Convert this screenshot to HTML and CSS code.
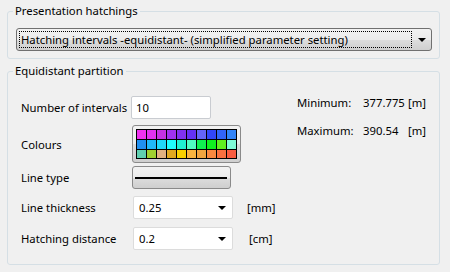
FILE: index.html
```html
<!DOCTYPE html>
<html lang="en">
<head>
    <meta charset="UTF-8">
    <meta name="viewport" content="width=device-width, initial-scale=1.0">
    <title>Hatching Settings</title>
    <link rel="stylesheet" href="styles.css">
</head>
<body>
    <div class="dialog">
        <fieldset class="group group-top">
            <legend>Presentation hatchings</legend>
            <div class="dropdown">
                <span class="focus-rect">Hatching intervals -equidistant- (simplified parameter setting)</span>
                <span class="arrow"></span>
            </div>
        </fieldset>

        <fieldset class="group group-main">
            <legend>Equidistant partition</legend>
            <div class="columns">
                <div class="form">
                    <div class="row row-intervals">
                        <span class="label">Number of intervals</span>
                        <div class="textbox">10</div>
                    </div>
                    <div class="row row-colours">
                        <span class="label">Colours</span>
                        <div class="push-button colours-button">
                            <div class="swatches">
                                <span style="background:#f032f0"></span>
                                <span style="background:#e032f0"></span>
                                <span style="background:#c432e4"></span>
                                <span style="background:#a032f0"></span>
                                <span style="background:#8032f0"></span>
                                <span style="background:#6432f4"></span>
                                <span style="background:#6464f8"></span>
                                <span style="background:#3246f8"></span>
                                <span style="background:#3264f8"></span>
                                <span style="background:#3284f8"></span>
                                <span style="background:#2090f0"></span>
                                <span style="background:#20b8f8"></span>
                                <span style="background:#20d8f8"></span>
                                <span style="background:#20fcfc"></span>
                                <span style="background:#20f0d0"></span>
                                <span style="background:#50fcc0"></span>
                                <span style="background:#10f050"></span>
                                <span style="background:#10f020"></span>
                                <span style="background:#60f020"></span>
                                <span style="background:#80fcd8"></span>
                                <span style="background:#60d0b0"></span>
                                <span style="background:#a0d030"></span>
                                <span style="background:#e0b080"></span>
                                <span style="background:#e0a820"></span>
                                <span style="background:#f8d000"></span>
                                <span style="background:#f8b440"></span>
                                <span style="background:#f0a440"></span>
                                <span style="background:#f88840"></span>
                                <span style="background:#f87040"></span>
                                <span style="background:#f85c40"></span>
                            </div>
                        </div>
                    </div>
                    <div class="row row-linetype">
                        <span class="label">Line type</span>
                        <div class="push-button linetype-button">
                            <span class="line-sample"></span>
                        </div>
                    </div>
                    <div class="row row-thickness">
                        <span class="label">Line thickness</span>
                        <div class="select">
                            <span class="select-value">0.25</span>
                            <span class="arrow"></span>
                        </div>
                        <span class="unit unit-mm">[mm]</span>
                    </div>
                    <div class="row row-distance">
                        <span class="label">Hatching distance</span>
                        <div class="select">
                            <span class="select-value">0.2</span>
                            <span class="arrow"></span>
                        </div>
                        <span class="unit unit-cm">[cm]</span>
                    </div>
                </div>

                <div class="range">
                    <span>Minimum:</span>
                    <span>377.775</span>
                    <span>[m]</span>
                    <span>Maximum:</span>
                    <span>390.54</span>
                    <span>[m]</span>
                </div>
            </div>
        </fieldset>
    </div>
</body>
</html>
```

FILE: styles.css
```css
body {
    margin: 0;
    background-color: #f0f0f0;
    font-family: "Noto Sans", sans-serif;
    font-size: 11.3px;
    color: #000;
}

.dialog {
    padding: 3px 10px 0 7px;
}

.group {
    margin: 0;
    border: 1px solid #d5dfe5;
    border-radius: 3px;
}

.group legend {
    padding: 0 2px;
    line-height: 16px;
}

.group-top {
    padding: 9px 7px 7px 8px;
}

.group-top legend {
    margin-left: -3px;
}

.group-main {
    margin-top: 4px;
    padding: 17px 7px 14px 13px;
}

.group-main legend {
    margin-left: -8px;
}

/* drop-down list in the first group */
.dropdown {
    display: flex;
    align-items: center;
    height: 23px;
    box-sizing: border-box;
    padding: 0 5px 0 2px;
    border: 1px solid #707070;
    border-radius: 3px;
    background: linear-gradient(#f2f2f2, #ebebeb 50%, #dddddd 51%, #cfcfcf);
}

.focus-rect {
    flex: 1;
    height: 17px;
    box-sizing: border-box;
    padding-left: 1px;
    line-height: 15px;
    border: 1px dotted #000;
}

.arrow {
    width: 0;
    height: 0;
    border-left: 4px solid transparent;
    border-right: 4px solid transparent;
    border-top: 4px solid #000;
}

.dropdown .arrow {
    margin-left: 6px;
}

/* second group */
.columns {
    display: flex;
}

.form {
    width: 276px;
    flex-shrink: 0;
}

.row {
    display: flex;
    align-items: center;
}

.row-colours {
    margin-top: 6px;
}

.row-linetype {
    margin-top: 3px;
}

.row-thickness {
    margin-top: 7px;
}

.row-distance {
    margin-top: 8px;
}

.label {
    width: 110px;
    flex-shrink: 0;
    white-space: nowrap;
}

.textbox {
    width: 80px;
    height: 23px;
    box-sizing: border-box;
    padding-left: 4px;
    line-height: 21px;
    background: #fff;
    border: 1px solid #c9ccd1;
    border-radius: 2px;
}

.push-button {
    box-sizing: border-box;
    margin-left: 1px;
    border: 1px solid #8a8a8a;
    border-radius: 3px;
    background: linear-gradient(#f2f2f2, #ebebeb 50%, #dddddd 51%, #cfcfcf);
}

.colours-button {
    width: 109px;
    padding: 3px;
}

.swatches {
    display: grid;
    grid-template-columns: repeat(10, 9px);
    grid-template-rows: 9px 9px 8px;
    gap: 1px;
    padding: 1px;
    width: max-content;
    background: #000;
}

.linetype-button {
    display: flex;
    align-items: center;
    width: 99px;
    height: 23px;
    padding: 0 3px 0 2px;
}

.line-sample {
    flex: 1;
    height: 2px;
    background: #000;
}

.select {
    display: flex;
    align-items: center;
    width: 100px;
    height: 23px;
    box-sizing: border-box;
    margin-left: 2px;
    padding: 0 6px 0 5px;
    background: #fff;
    border: 1px solid #dcdcdc;
    border-radius: 2px;
}

.select-value {
    flex: 1;
}

.unit-mm {
    margin-left: 14px;
}

.unit-cm {
    margin-left: 16px;
}

.range {
    display: grid;
    grid-template-columns: 66px 45px auto;
    grid-auto-rows: 16px;
    row-gap: 12px;
    align-content: start;
    margin-top: -1px;
    white-space: nowrap;
}
```
